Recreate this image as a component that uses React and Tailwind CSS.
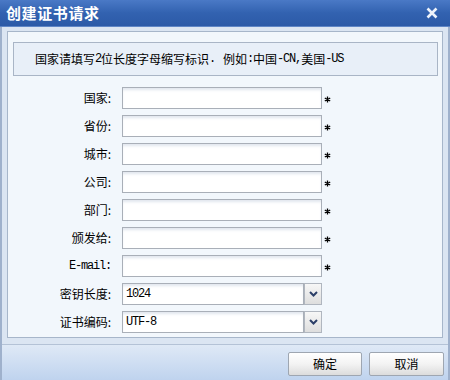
import React from "react";

const cjk = "font-['Noto_Sans_CJK_SC','Noto_Sans',sans-serif]";
const mono = "font-['Liberation_Mono',monospace] tracking-[-1.2px]";

const textRows = [
    { label: "国家:" },
    { label: "省份:" },
    { label: "城市:" },
    { label: "公司:" },
    { label: "部门:" },
    { label: "颁发给:" },
    { label: "E-mail:", latin: true },
];

const selectRows = [
    { label: "密钥长度:", value: "1024" },
    { label: "证书编码:", value: "UTF-8" },
];

const inputBox =
    "h-[22px] border border-[#a9afb8] bg-white shadow-[inset_0_3px_3px_-1px_#e1e6ee]";

const Label = ({ children, latin }) => (
    <div className={`w-[103px] text-right text-[12px] text-black ${latin ? mono : ""}`}>
        {children}
    </div>
);

const Chevron = () => (
    <svg width="9" height="6" viewBox="0 0 9 6">
        <path d="M1 1 L4.5 4.5 L8 1" fill="none" stroke="#2c3f68" strokeWidth="2" />
    </svg>
);

const Star = () => (
    <svg width="7" height="7" viewBox="0 0 7 7" className="ml-[2px] mt-[2px]">
        <path d="M3.5 0.5 V6.5 M0.8 2 L6.2 5 M6.2 2 L0.8 5" stroke="#000" strokeWidth="1.3" />
    </svg>
);

const App = () => {
    return (
        <div className={`w-[450px] h-[380px] flex flex-col bg-[#dbe5f2] ${cjk}`}>
            {/* title bar */}
            <div className="h-[27px] flex items-center justify-between pl-[6px] pr-[12px] bg-linear-to-b from-[#4a79c6] via-[#3262b0] to-[#2c5aa7] border-b border-[#5f86c6]">
                <span className="text-white text-[15px] font-bold tracking-[0.6px]">创建证书请求</span>
                <svg width="12" height="12" viewBox="0 0 12 12">
                    <path d="M1.5 1.5 L10.5 10.5 M10.5 1.5 L1.5 10.5" stroke="#eef3fb" strokeWidth="2.6" />
                </svg>
            </div>

            {/* body */}
            <div className="flex-1 flex flex-col border-l-2 border-r-2 border-[#9fb1cc] bg-[#dbe5f2]">
                <div className="mt-[4px] ml-[5px] mr-[5px] h-[307px] border border-[#a7b6ca] bg-[#f2f7fc] flex flex-col">
                    <div className="mt-[10px] ml-[5px] mr-[4px] h-[34px] border border-[#a9b5c6] bg-[#e8eff8] flex items-center pl-[21px] text-[12px] text-black">
                        国家请填写<span className={mono}>2</span>位长度字母缩写标识<span className={mono}>.</span><span className="ml-[8px]">例如</span><span className={mono}>:</span>中国<span className={mono}>-CN,</span>美国<span className={mono}>-US</span>
                    </div>

                    <div className="mt-[11px] flex flex-col gap-[6px]">
                        {textRows.map((row, idx) => (
                            <div className="flex items-center" key={idx}>
                                <Label latin={row.latin}>{row.label}</Label>
                                <div className={`ml-[11px] w-[200px] ${inputBox}`}></div>
                                <Star />
                            </div>
                        ))}
                        {selectRows.map((row, idx) => (
                            <div className="flex items-center" key={idx}>
                                <Label>{row.label}</Label>
                                <div className={`ml-[11px] w-[182px] flex items-center pl-[3px] text-[12px] ${inputBox} ${mono}`}>
                                    {row.value}
                                </div>
                                <div className="w-[18px] h-[22px] border border-[#b0b6bf] bg-linear-to-b from-[#f7f7f7] to-[#dedede] flex items-center justify-center">
                                    <Chevron />
                                </div>
                            </div>
                        ))}
                    </div>
                </div>

                {/* footer */}
                <div className="mt-[6px] flex-1 border-t border-[#b4c2d6] bg-linear-to-b from-[#dfe9f6] to-[#bfd3ee] flex justify-end items-start pt-[7px] pr-[4px] gap-[7px]">
                    <button className="w-[74px] h-[24px] border border-[#9ea6b1] rounded-[2px] bg-linear-to-b from-white via-[#f3f3f3] to-[#dcdcdc] text-[12px] text-black">
                        确定
                    </button>
                    <button className="w-[75px] h-[24px] border border-[#9ea6b1] rounded-[2px] bg-linear-to-b from-white via-[#f3f3f3] to-[#dcdcdc] text-[12px] text-black">
                        取消
                    </button>
                </div>
            </div>
        </div>
    );
};

export default App;
